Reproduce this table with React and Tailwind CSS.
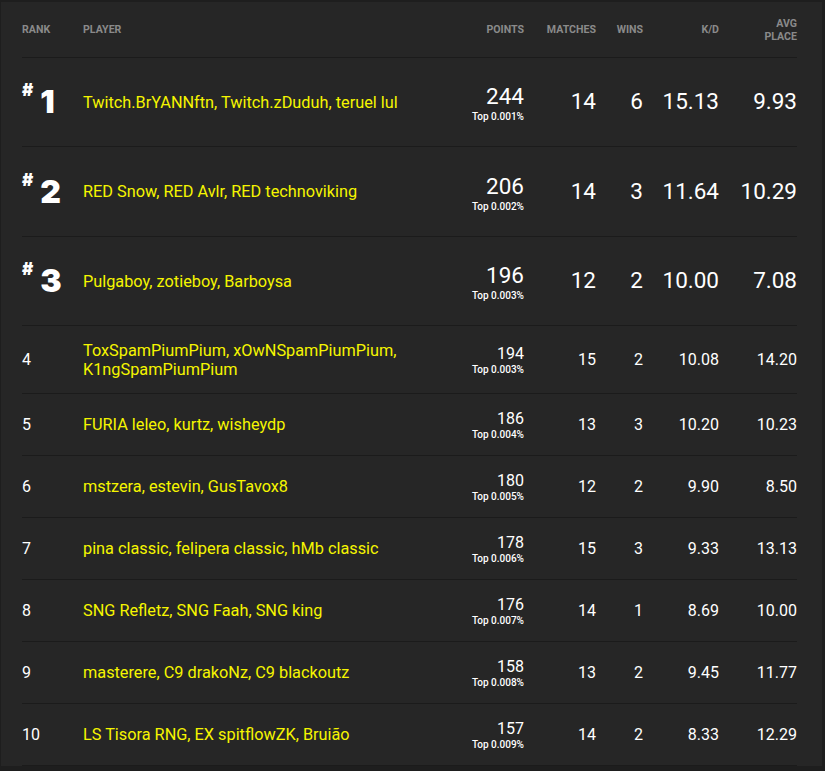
import React from 'react';

const rows = [
  { rank: 1, player: 'Twitch.BrYANNftn, Twitch.zDuduh, teruel lul', points: 244, top: '0.001%', matches: 14, wins: 6, kd: '15.13', avg: '9.93', h: 'h-[89px]' },
  { rank: 2, player: 'RED Snow, RED Avlr, RED technoviking', points: 206, top: '0.002%', matches: 14, wins: 3, kd: '11.64', avg: '10.29', h: 'h-[90px]' },
  { rank: 3, player: 'Pulgaboy, zotieboy, Barboysa', points: 196, top: '0.003%', matches: 12, wins: 2, kd: '10.00', avg: '7.08', h: 'h-[89px]' },
  { rank: 4, player: 'ToxSpamPiumPium, xOwNSpamPiumPium, K1ngSpamPiumPium', points: 194, top: '0.003%', matches: 15, wins: 2, kd: '10.08', avg: '14.20' },
  { rank: 5, player: 'FURIA leleo, kurtz, wisheydp', points: 186, top: '0.004%', matches: 13, wins: 3, kd: '10.20', avg: '10.23' },
  { rank: 6, player: 'mstzera, estevin, GusTavox8', points: 180, top: '0.005%', matches: 12, wins: 2, kd: '9.90', avg: '8.50' },
  { rank: 7, player: 'pina classic, felipera classic, hMb classic', points: 178, top: '0.006%', matches: 15, wins: 3, kd: '9.33', avg: '13.13' },
  { rank: 8, player: 'SNG Refletz, SNG Faah, SNG king', points: 176, top: '0.007%', matches: 14, wins: 1, kd: '8.69', avg: '10.00' },
  { rank: 9, player: 'masterere, C9 drakoNz, C9 blackoutz', points: 158, top: '0.008%', matches: 13, wins: 2, kd: '9.45', avg: '11.77' },
  { rank: 10, player: 'LS Tisora RNG, EX spitflowZK, Bruião', points: 157, top: '0.009%', matches: 14, wins: 2, kd: '8.33', avg: '12.29' },
];

const Row = ({ r }) => {
  const podium = r.rank <= 3;
  const stat = podium ? 'text-[22.5px]' : 'text-[16px]';
  return (
    <div className={`flex items-center border-b border-[#1b1b1b] ${podium ? r.h : 'min-h-[62px] py-[14.5px]'}`}>
      <div className="w-[61px] shrink-0 text-white">
        {podium ? (
          <div className="flex items-start font-['Inter'] font-black leading-none">
            <span className="text-[17px] mt-[-4px]">#</span>
            <span className="text-[32px] ml-[7px] tracking-tight">{r.rank}</span>
          </div>
        ) : (
          <span className="text-[16px]">{r.rank}</span>
        )}
      </div>
      <div className="flex-1 text-[#f5f500] text-[16.3px] leading-[19px] pr-4">{r.player}</div>
      <div className="w-[80px] shrink-0 text-right text-white">
        <div className={`${stat} ${podium ? 'leading-[30px]' : 'leading-[20px]'}`}>{r.points}</div>
        <div className="text-[10px] font-medium leading-[12px]">Top {r.top}</div>
      </div>
      <div className={`w-[72px] shrink-0 text-right text-white ${stat}`}>{r.matches}</div>
      <div className={`w-[47px] shrink-0 text-right text-white ${stat}`}>{r.wins}</div>
      <div className={`w-[76px] shrink-0 text-right text-white ${stat}`}>{r.kd}</div>
      <div className={`w-[78px] shrink-0 text-right text-white ${stat}`}>{r.avg}</div>
    </div>
  );
};

export default function App() {
  return (
    <div className="min-h-[771px] bg-[#1e1e1e] pt-[2px] pl-[1px] pr-[3px] font-['Roboto',sans-serif]">
      <div className="bg-[#262626] pl-[21px] pr-[25px]">
        <div className="flex items-center h-[56px] border-b border-[#1b1b1b] text-[10.6px] font-bold text-[#8a8a8a] leading-[13px]">
          <div className="w-[61px] shrink-0">RANK</div>
          <div className="flex-1">PLAYER</div>
          <div className="w-[80px] shrink-0 text-right">POINTS</div>
          <div className="w-[72px] shrink-0 text-right">MATCHES</div>
          <div className="w-[47px] shrink-0 text-right">WINS</div>
          <div className="w-[76px] shrink-0 text-right">K/D</div>
          <div className="w-[78px] shrink-0 text-right">AVG<br />PLACE</div>
        </div>
        {rows.map(r => <Row key={r.rank} r={r} />)}
      </div>
    </div>
  );
}
